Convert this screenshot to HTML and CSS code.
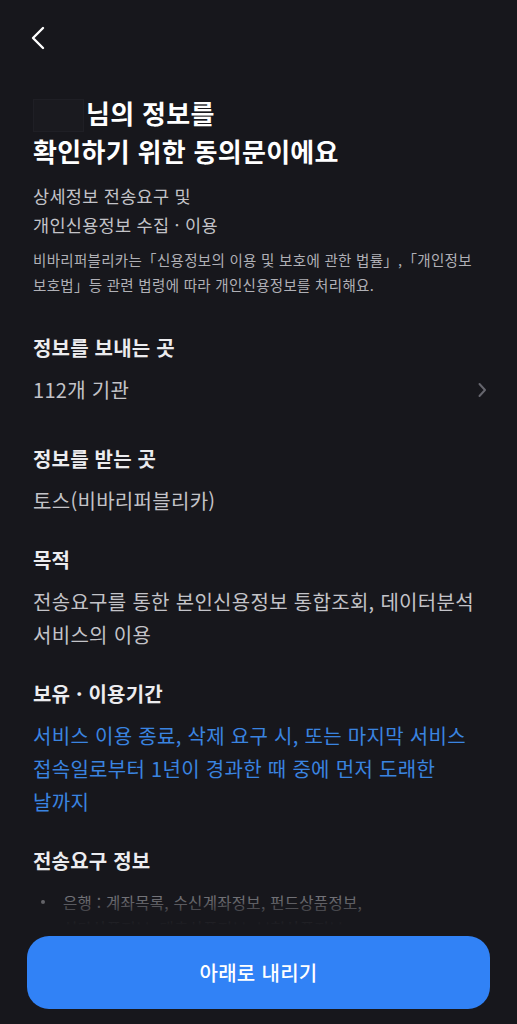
FILE: index.html
```html
<!DOCTYPE html>
<html lang="ko">

<head>
    <meta charset="UTF-8">
    <meta name="viewport" content="width=device-width, initial-scale=1.0">
    <title>동의문</title>
    <link rel="stylesheet" href="styles.css">
</head>

<body>
    <div class="page">
        <div class="header">
            <a class="back-btn" href="javascript:;">
                <svg width="16" height="24" viewBox="0 0 16 24">
                    <path d="M13 2 L3 12 L13 22" fill="none" stroke="#ffffff" stroke-width="2.4" stroke-linecap="round" stroke-linejoin="round" />
                </svg>
            </a>
        </div>
        <div class="content">
            <h1 class="title"><span class="name-mask"></span>님의 정보를<br>확인하기 위한 동의문이에요</h1>
            <p class="subtitle">상세정보 전송요구 및<br>개인신용정보 수집 · 이용</p>
            <p class="desc">비바리퍼블리카는「신용정보의 이용 및 보호에 관한 법률」,「개인정보<br>보호법」등 관련 법령에 따라 개인신용정보를 처리해요.</p>

            <div class="section">
                <h2 class="section-title">정보를 보내는 곳</h2>
                <a class="section-row" href="javascript:;">
                    <span>112개 기관</span>
                    <svg width="10" height="16" viewBox="0 0 10 16">
                        <path d="M2.5 2 L8 8 L2.5 14" fill="none" stroke="#66666e" stroke-width="2" stroke-linecap="round" stroke-linejoin="round" />
                    </svg>
                </a>
            </div>

            <div class="section">
                <h2 class="section-title">정보를 받는 곳</h2>
                <p class="section-text">토스(비바리퍼블리카)</p>
            </div>

            <div class="section">
                <h2 class="section-title">목적</h2>
                <p class="section-text">전송요구를 통한 본인신용정보 통합조회, 데이터분석<br>서비스의 이용</p>
            </div>

            <div class="section">
                <h2 class="section-title">보유 · 이용기간</h2>
                <p class="section-text blue">서비스 이용 종료, 삭제 요구 시, 또는 마지막 서비스<br>접속일로부터 1년이 경과한 때 중에 먼저 도래한<br>날까지</p>
            </div>

            <div class="section">
                <h2 class="section-title">전송요구 정보</h2>
                <ul class="info-list">
                    <li>은행 : 계좌목록, 수신계좌정보, 펀드상품정보,<br>신탁상품정보, 대출상품정보, 보험상품정보</li>
                </ul>
            </div>
        </div>
        <div class="footer">
            <a class="main-btn" href="javascript:;">아래로 내리기</a>
        </div>
    </div>
</body>

</html>
```

FILE: styles.css
```css
* {
    margin: 0;
    padding: 0;
    box-sizing: border-box;
}

a {
    text-decoration: none;
    color: inherit;
}

body {
    background-color: #17171c;
    font-family: "Noto Sans CJK KR", "Noto Sans", sans-serif;
    color: #c3c3c8;
}

.page {
    height: 100vh;
    display: flex;
    flex-direction: column;
    overflow: hidden;
}

.header {
    height: 75px;
    flex-shrink: 0;
    display: flex;
    align-items: center;
    padding-left: 30px;
}

.back-btn {
    display: flex;
}

.content {
    flex: 1;
    position: relative;
    overflow: hidden;
    padding: 19px 30px 0 33px;
}

/* 아래쪽으로 흐려지는 효과 */
.content::after {
    content: "";
    position: absolute;
    left: 0;
    right: 0;
    bottom: 0;
    height: 62px;
    background: linear-gradient(rgba(23, 23, 28, 0), rgba(23, 23, 28, .5) 50%, #17171c 92%);
}

.title {
    font-size: 26px;
    line-height: 37px;
    font-weight: 700;
    letter-spacing: .3px;
    color: #ffffff;
}

.name-mask {
    display: inline-block;
    width: 51px;
    height: 33px;
    margin-right: 2px;
    vertical-align: -8px;
    background-color: #1a1a1f;
    border: 1px solid #1f1f25;
}

.subtitle {
    margin-top: 12px;
    font-size: 17.5px;
    line-height: 29px;
    letter-spacing: .3px;
    color: #c3c3c8;
}

.desc {
    margin-top: 8px;
    font-size: 14.5px;
    line-height: 25px;
    letter-spacing: .3px;
    color: #b0b0b6;
}

.section {
    margin-top: 29px;
}

.desc + .section {
    margin-top: 37px;
}

.section-title {
    font-size: 20px;
    line-height: 28px;
    font-weight: 700;
    letter-spacing: .2px;
    color: #ececef;
}

.section-text,
.section-row {
    margin-top: 11px;
    font-size: 20px;
    line-height: 33px;
    letter-spacing: .3px;
    color: #c3c3c8;
}

.section-row {
    display: flex;
    justify-content: space-between;
    align-items: center;
    padding-bottom: 10px;
}

.blue {
    color: #3a84e0;
}

.info-list {
    list-style: none;
    margin-top: 14px;
    font-size: 15.5px;
    line-height: 26px;
    letter-spacing: .3px;
    color: #c3c3c8;
}

.info-list li {
    position: relative;
    padding-left: 30px;
}

.info-list li::before {
    content: "";
    position: absolute;
    left: 8px;
    top: 11px;
    width: 4px;
    height: 4px;
    border-radius: 50%;
    background-color: #c3c3c8;
}

.footer {
    flex-shrink: 0;
    padding: 6px 27px 15px 27px;
}

.main-btn {
    display: block;
    height: 73px;
    line-height: 73px;
    border-radius: 22px;
    background-color: #3182f6;
    color: #ffffff;
    text-align: center;
    font-size: 20px;
    font-weight: 500;
    letter-spacing: .3px;
}
```
